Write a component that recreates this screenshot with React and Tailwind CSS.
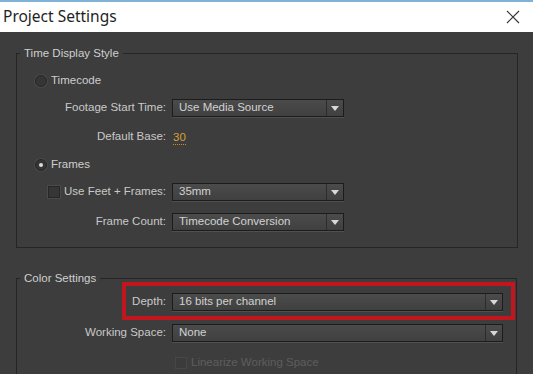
import React from 'react';

function Dropdown({ value, width }) {
    return (
        <div
            className="flex h-[18px] items-center border border-[#1c1c1c] bg-gradient-to-b from-[#4b4b4b] to-[#404040] text-[11.5px] text-[#d2d2d2] shadow-[0_1px_0_#505050]"
            style={{ width }}
        >
            <span className="flex-1 truncate pl-[6px] leading-none">{value}</span>
            <div className="flex h-full w-[17px] items-center justify-center border-l border-[#2c2c2c]">
                <svg width="8" height="5" viewBox="0 0 8 5">
                    <path d="M0 0 L8 0 L4 5 Z" fill="#d8d8d8" />
                </svg>
            </div>
        </div>
    );
}

function Radio({ checked, label }) {
    return (
        <div className="flex h-[18px] items-center pl-[18px]">
            <span className="flex h-[12px] w-[12px] items-center justify-center rounded-full border border-[#262626] bg-[#353535] shadow-[0_0_0_1px_#4a4a4a]">
                {checked && <span className="h-[4px] w-[4px] rounded-full bg-[#dcdcdc]" />}
            </span>
            <span className="ml-[4px] text-[11.5px] text-[#cdcdcd]">{label}</span>
        </div>
    );
}

function Row({ label, children, className = '', check }) {
    return (
        <div className={`flex h-[18px] items-center ${className}`}>
            <div className="flex w-[149px] items-center justify-end text-[11.5px] text-[#c9c9c9]">
                {check && <span className="mr-[4px] h-[12px] w-[12px] border border-[#262626] bg-[#363636] shadow-[0_0_0_1px_#4a4a4a]" />}
                {label}
            </div>
            <div className="ml-[6px] flex items-center">{children}</div>
        </div>
    );
}

export default function App() {
    return (
        <div className="h-[374px] w-[533px] overflow-hidden bg-[#3d3d3d]" style={{ fontFamily: '"Liberation Sans", Arial, sans-serif' }}>
            <div className="h-[2px] bg-[#7fb2d6]" />
            <div className="flex h-[30px] items-center justify-between bg-white pl-[3px] pr-[13px]">
                <span className="text-[15.5px] text-[#1f1f1f]" style={{ fontFamily: '"Noto Sans", "Liberation Sans", sans-serif' }}>
                    Project Settings
                </span>
                <svg width="14" height="14" viewBox="0 0 14 14">
                    <path d="M1 1 L13 13 M13 1 L1 13" stroke="#333" strokeWidth="1.1" />
                </svg>
            </div>

            <fieldset className="ml-[16px] mt-[14px] w-[502px] border border-[#252525] pb-[16px]">
                <legend className="ml-[3px] px-[4px] text-[11.5px] leading-[14px] text-[#cfcfcf]">Time Display Style</legend>
                <div className="mt-[12px] flex flex-col">
                    <Radio label="Timecode" />
                    <Row label="Footage Start Time:" className="mt-[9px]">
                        <Dropdown value="Use Media Source" width={172} />
                    </Row>
                    <Row label="Default Base:" className="mt-[11px]">
                        <span className="ml-[1px] border-b border-dotted border-[#c89028] text-[11.5px] leading-[14px] text-[#d9a133]">30</span>
                    </Row>
                    <div className="mt-[10px]">
                        <Radio checked label="Frames" />
                    </div>
                    <Row label="Use Feet + Frames:" className="mt-[9px]" check>
                        <Dropdown value="35mm" width={172} />
                    </Row>
                    <Row label="Frame Count:" className="mt-[12px]">
                        <Dropdown value="Timecode Conversion" width={172} />
                    </Row>
                </div>
            </fieldset>

            <fieldset className="ml-[16px] mt-[23px] h-[120px] w-[501px] border border-b-0 border-[#252525]">
                <legend className="ml-[3px] px-[4px] text-[11.5px] leading-[14px] text-[#cfcfcf]">Color Settings</legend>
                <div className="mt-[8px] flex flex-col">
                    <div className="relative">
                        <Row label="Depth:">
                            <Dropdown value="16 bits per channel" width={331} />
                        </Row>
                        <div className="pointer-events-none absolute left-[105px] top-[-11px] h-[38px] w-[393px] border-[4px] border-[#c1161d]" />
                    </div>
                    <Row label="Working Space:" className="mt-[13px]">
                        <Dropdown value="None" width={331} />
                    </Row>
                    <div className="mt-[12px] flex h-[18px] items-center pl-[158px]">
                        <span className="h-[12px] w-[12px] border border-[#474747] bg-[#3b3b3b]" />
                        <span className="ml-[4px] text-[11.5px] text-[#5d5d5d]">Linearize Working Space</span>
                    </div>
                </div>
            </fieldset>
        </div>
    );
}
